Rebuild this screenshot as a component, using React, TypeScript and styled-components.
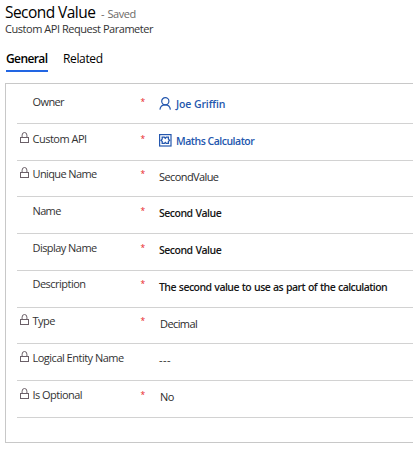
import React from "react";
import styled, { createGlobalStyle } from "styled-components";

const GlobalStyle = createGlobalStyle`
  * { box-sizing: border-box; }
  body {
    margin: 0;
    background: #fff;
    color: #000;
    font-family: "Open Sans", "Noto Sans", sans-serif;
    overflow: hidden;
  }
`;

const Page = styled.main`
  width: 413px;
  height: 458px;
  overflow: hidden;
  white-space: nowrap;
`;

const Header = styled.header`
  padding: 2px 0 0 5px;
`;

const TitleRow = styled.div`
  display: flex;
  align-items: baseline;
  height: 20px;
  line-height: 20px;
`;

const Title = styled.h1`
  margin: 0;
  width: 96px;
  font-size: 15.5px;
  font-weight: 500;
  letter-spacing: -0.55px;
`;

const SavedState = styled.span`
  font-size: 11px;
  letter-spacing: -0.45px;
  word-spacing: 1px;
  color: #6b6967;
`;

const Subtitle = styled.div`
  height: 14px;
  line-height: 14px;
  font-size: 11px;
  letter-spacing: -0.46px;
  color: #333;
`;

const TabList = styled.nav`
  display: flex;
  gap: 15px;
  padding: 15px 0 0 1px;
`;

const Tab = styled.div<{ $active?: boolean }>`
  height: 21px;
  width: 42px;
  line-height: 16px;
  font-size: 12px;
  font-weight: ${(p) => (p.$active ? 600 : 400)};
  letter-spacing: ${(p) => (p.$active ? "-0.6px" : "-0.35px")};
  border-bottom: 2px solid ${(p) => (p.$active ? "#2266e3" : "transparent")};
`;

const Panel = styled.section`
  margin: 11px 0 0 5px;
  height: 360px;
  padding-left: 11px;
  border: 1px solid #c8c8c8;
  border-right: 0;
`;

const Row = styled.div<{ $height: number }>`
  display: grid;
  grid-template-columns: 15.5px 107.5px 19px 1fr;
  height: ${(p) => p.$height}px;
  border-bottom: 1px solid #d2d2d2;
`;

const LockCell = styled.div<{ $top: number }>`
  padding: ${(p) => p.$top}px 0 0 3px;
  line-height: 0;
`;

const Label = styled.div<{ $top: number; $spacing: number }>`
  padding-top: ${(p) => p.$top}px;
  line-height: 16px;
  font-size: 11px;
  letter-spacing: ${(p) => p.$spacing}px;
  color: #333;
`;

const Required = styled.div<{ $top: number }>`
  padding: ${(p) => p.$top}px 0 0 0.5px;
  line-height: 15px;
  font-size: 8.5px;
  color: #e8221f;
`;

const Value = styled.div<{ $top: number; $spacing: number; $tone: Tone; $indent: number }>`
  display: flex;
  gap: 4px;
  padding: ${(p) => p.$top}px 0 0 ${(p) => p.$indent}px;
  line-height: 16px;
  font-size: ${(p) => (p.$tone === "plain" ? 11 : 10.5)}px;
  font-weight: ${(p) => (p.$tone === "plain" ? 500 : 600)};
  letter-spacing: ${(p) => p.$spacing}px;
  word-spacing: ${(p) => (p.$tone === "strong" ? 0.7 : 0)}px;
  color: ${(p) => (p.$tone === "link" ? "#2457ae" : p.$tone === "plain" ? "#2b2b2b" : "#161616")};

  svg { margin-top: 1px; }
`;

type Tone = "link" | "plain" | "strong";

function LockIcon() {
  return (
    <svg width="10" height="12" viewBox="0 0 10 12" fill="none" stroke="#6b6068">
      <rect x="0.5" y="5.5" width="8" height="5" />
      <path d="M2.1 5.500V3.200a2.400 2.700 0 0 1 4.800 0v2.300" />
    </svg>
  );
}

function PersonIcon() {
  return (
    <svg width="13" height="14" viewBox="0 0 13 14" fill="none" stroke="#2457ae" strokeWidth="1.2">
      <circle cx="6.300" cy="4.300" r="3.600" />
      <path d="M0.900 12.600C1.300 9.700 3.600 7.900 6.300 7.900s4.700 1.800 5.100 4.700" />
    </svg>
  );
}

function EntityIcon() {
  return (
    <svg width="13" height="13" viewBox="0 0 13 13" fill="none" stroke="#2457ae">
      <rect x="0.600" y="0.600" width="11.400" height="11.400" strokeWidth="1.200" />
      <path d="M4.700 3.200H3.200v1.900L2 6.300l1.200 1.200v1.900h2.200l.9-1 .9 1h2.200V7.500l1.200-1.200-1.200-1.200V3.200H7.200l-.9 1-.9-1z" strokeWidth="1.300" />
    </svg>
  );
}

type Field = {
  label: string;
  labelSpacing: number;
  labelTop: number;
  height: number;
  locked?: boolean;
  required?: boolean;
  value: string;
  valueSpacing: number;
  valueTop: number;
  tone: Tone;
  icon?: "person" | "entity";
  indent?: number;
};

const fields: Field[] = [
  { label: "Owner", labelSpacing: -0.6, labelTop: 10, height: 40, required: true, value: "Joe Griffin", valueSpacing: -0.11, valueTop: 12, tone: "link", icon: "person" },
  { label: "Custom API", labelSpacing: -0.5, labelTop: 7, height: 37, locked: true, required: true, value: "Maths Calculator", valueSpacing: -0.49, valueTop: 9, tone: "link", icon: "entity" },
  { label: "Unique Name", labelSpacing: -0.61, labelTop: 5, height: 36, locked: true, required: true, value: "SecondValue", valueSpacing: -0.59, valueTop: 8, tone: "plain" },
  { label: "Name", labelSpacing: -0.65, labelTop: 6, height: 37, required: true, value: "Second Value", valueSpacing: -0.51, valueTop: 8, tone: "strong" },
  { label: "Display Name", labelSpacing: -0.55, labelTop: 6, height: 37, required: true, value: "Second Value", valueSpacing: -0.51, valueTop: 8, tone: "strong" },
  { label: "Description", labelSpacing: -0.52, labelTop: 5, height: 37, required: true, value: "The second value to use as part of the calculation", valueSpacing: -0.56, valueTop: 8, tone: "strong" },
  { label: "Type", labelSpacing: -0.55, labelTop: 5, height: 36, locked: true, required: true, value: "Decimal", valueSpacing: -0.6, valueTop: 8, tone: "plain", indent: 1 },
  { label: "Logical Entity Name", labelSpacing: -0.5, labelTop: 6, height: 37, locked: true, value: "---", valueSpacing: 0.5, valueTop: 8, tone: "plain" },
  { label: "Is Optional", labelSpacing: -0.53, labelTop: 6, height: 37, locked: true, required: true, value: "No", valueSpacing: -0.5, valueTop: 8, tone: "plain", indent: 1 },
];

function FieldRow({ field }: { field: Field }) {
  return (
    <Row $height={field.height}>
      <LockCell $top={field.labelTop + 1}>{field.locked && <LockIcon />}</LockCell>
      <Label $top={field.labelTop} $spacing={field.labelSpacing}>{field.label}</Label>
      <Required $top={field.labelTop}>{field.required && "*"}</Required>
      <Value $top={field.valueTop} $spacing={field.valueSpacing} $tone={field.tone} $indent={field.indent ?? 0}>
        {field.icon === "person" && <PersonIcon />}
        {field.icon === "entity" && <EntityIcon />}
        <span>{field.value}</span>
      </Value>
    </Row>
  );
}

export default function App() {
  return (
    <Page>
      <GlobalStyle />
      <Header>
        <TitleRow>
          <Title>Second Value</Title>
          <SavedState>- Saved</SavedState>
        </TitleRow>
        <Subtitle>Custom API Request Parameter</Subtitle>
        <TabList>
          <Tab $active>General</Tab>
          <Tab>Related</Tab>
        </TabList>
      </Header>
      <Panel>
        {fields.map((field) => (
          <FieldRow key={field.label} field={field} />
        ))}
      </Panel>
    </Page>
  );
}
